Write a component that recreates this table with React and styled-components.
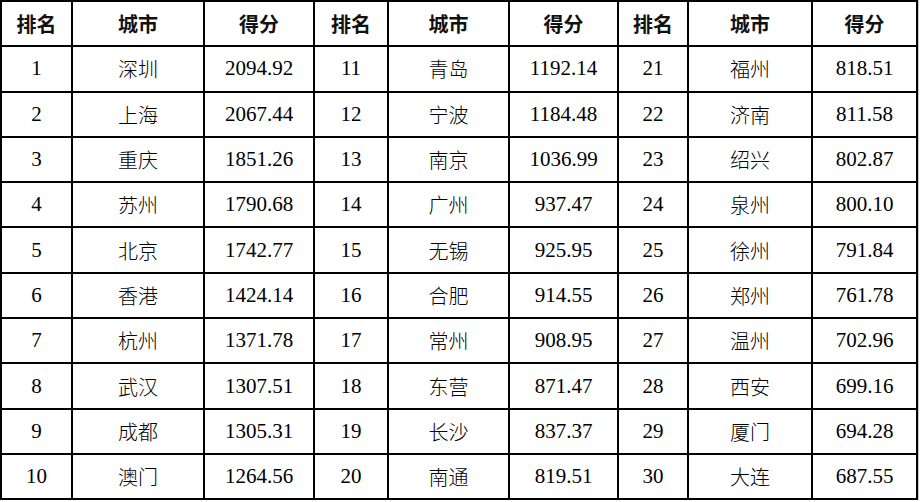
import styled, { createGlobalStyle } from 'styled-components';

const GlobalStyle = createGlobalStyle`
  body {
    margin: 0;
    background: #fff;
  }
`;

const Frame = styled.div`
  width: 920px;
  height: 502px;
  overflow: hidden;
`;

const Table = styled.table`
  border-collapse: collapse;
  table-layout: fixed;
  width: 918px;
  font-family: "Liberation Serif", "Noto Sans CJK SC", serif;
  font-size: 21px;
  color: #000;
  box-shadow: 1px 0 0 #c8c8c8;
`;

const Row = styled.tr`
  height: 45.3px;
`;

const Head = styled.th`
  border: 2px solid #000;
  padding: 0;
  text-align: center;
  font-weight: 700;
  font-family: "Noto Sans CJK SC", sans-serif;
  font-size: 20px;
  color: #111;
`;

const Cell = styled.td`
  border: 2px solid #000;
  padding: 0;
  text-align: center;
  font-family: ${(p) => (p.$city ? '"Noto Sans CJK SC", sans-serif' : '"Liberation Serif", serif')};
  font-size: ${(p) => (p.$city ? '20px' : '21px')};
  font-weight: ${(p) => (p.$city ? 300 : 400)};
  color: #000;
`;

const widths = [71, 132, 110, 74, 121, 109, 70, 124, 105];

const data = [
  ['深圳', '2094.92'], ['上海', '2067.44'], ['重庆', '1851.26'], ['苏州', '1790.68'],
  ['北京', '1742.77'], ['香港', '1424.14'], ['杭州', '1371.78'], ['武汉', '1307.51'],
  ['成都', '1305.31'], ['澳门', '1264.56'],
  ['青岛', '1192.14'], ['宁波', '1184.48'], ['南京', '1036.99'], ['广州', '937.47'],
  ['无锡', '925.95'], ['合肥', '914.55'], ['常州', '908.95'], ['东营', '871.47'],
  ['长沙', '837.37'], ['南通', '819.51'],
  ['福州', '818.51'], ['济南', '811.58'], ['绍兴', '802.87'], ['泉州', '800.10'],
  ['徐州', '791.84'], ['郑州', '761.78'], ['温州', '702.96'], ['西安', '699.16'],
  ['厦门', '694.28'], ['大连', '687.55'],
];

export default function App() {
  const rows = Array.from({ length: 10 }, (_, i) => i);
  return (
    <Frame>
      <GlobalStyle />
      <Table>
        <colgroup>
          {widths.map((w, i) => (
            <col key={i} style={{ width: w }} />
          ))}
        </colgroup>
        <thead>
          <Row>
            {[0, 1, 2].map((g) => [
              <Head key={`r${g}`}>排名</Head>,
              <Head key={`c${g}`}>城市</Head>,
              <Head key={`s${g}`}>得分</Head>,
            ])}
          </Row>
        </thead>
        <tbody>
          {rows.map((i) => (
            <Row key={i}>
              {[0, 1, 2].map((g) => {
                const rank = g * 10 + i + 1;
                const [city, score] = data[rank - 1];
                return [
                  <Cell key={`r${g}`}>{rank}</Cell>,
                  <Cell key={`c${g}`} $city>{city}</Cell>,
                  <Cell key={`s${g}`}>{score}</Cell>,
                ];
              })}
            </Row>
          ))}
        </tbody>
      </Table>
    </Frame>
  );
}
